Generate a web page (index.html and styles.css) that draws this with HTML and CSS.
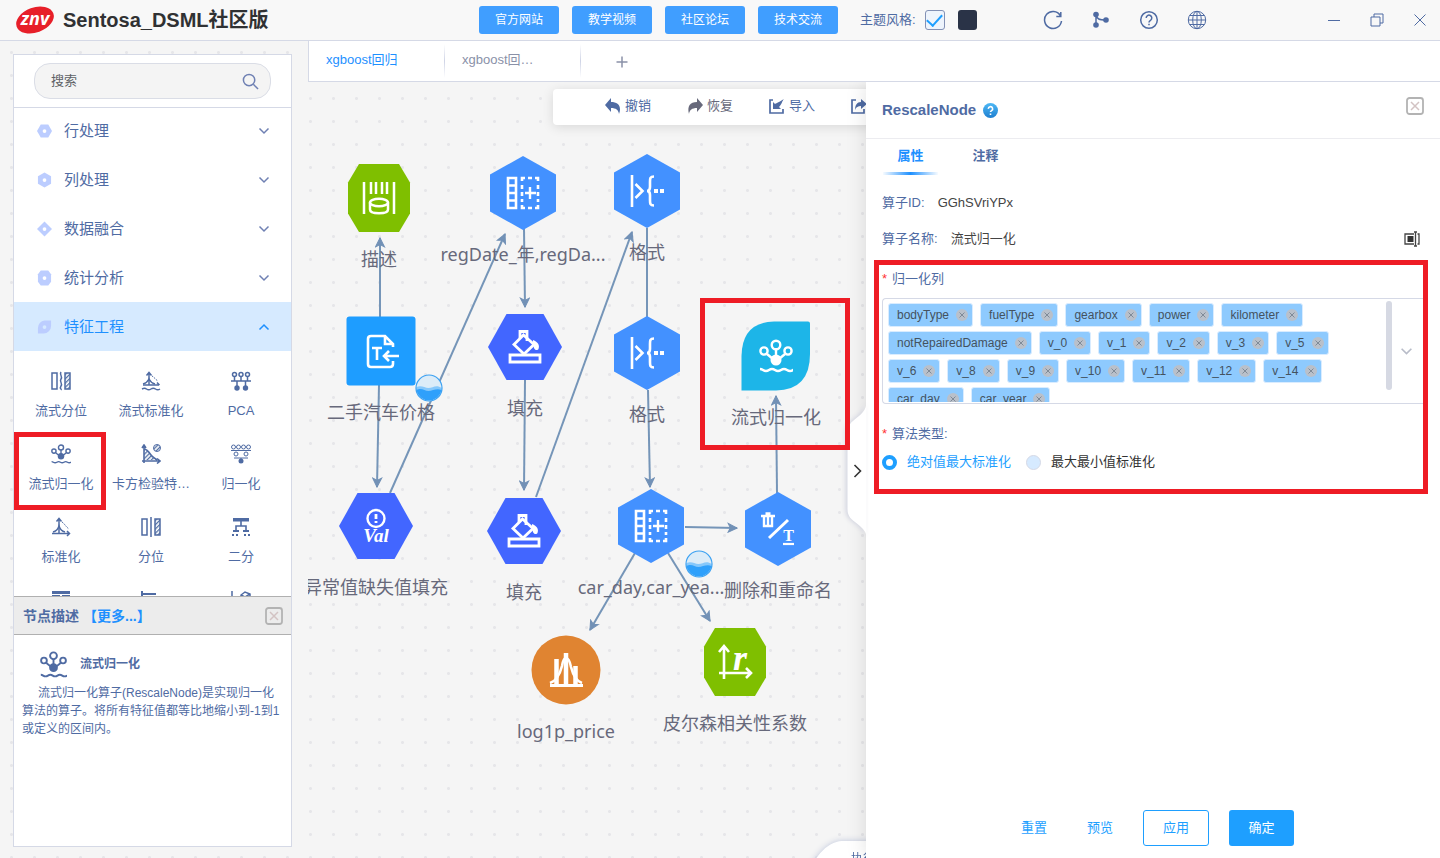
FILE: index.html
```html
<!DOCTYPE html>
<html lang="zh-CN">
<head>
<meta charset="utf-8">
<title>Sentosa_DSML社区版</title>
<link rel="stylesheet" href="styles.css">
</head>
<body>
<svg class="defs" aria-hidden="true">
  <defs>
    <marker id="arrow" viewBox="0 0 10 10" refX="9" refY="5" markerWidth="11" markerHeight="11" markerUnits="userSpaceOnUse" orient="auto">
      <path d="M1 1 9 5 1 9 3 5z" fill="#7291b6" stroke="#7291b6" stroke-width="1"/>
    </marker>
    <linearGradient id="ball" x1="0" y1="0" x2="0" y2="1"><stop offset="0" stop-color="#4db8f5"/><stop offset="1" stop-color="#1f7fd0"/></linearGradient>
    <pattern id="hatch" width="3" height="3" patternUnits="userSpaceOnUse" patternTransform="rotate(45)"><path d="M0 0V3" stroke="#5270a4" stroke-width="2.600"/></pattern>
  </defs>
  <symbol id="chevron" viewBox="0 0 12 12"><path d="M1.500 3.500 6 8 10.500 3.500" fill="none" stroke="currentColor" stroke-width="1.500"/></symbol>
  <symbol id="close" viewBox="0 0 18 18"><rect x="1" y="1" width="16" height="16" rx="2.500" fill="none" stroke="#b3b3b3" stroke-width="1.800"/><path d="M5 5l8 8M13 5l-8 8" stroke="#d3c3c3" stroke-width="1.500"/></symbol>
  <symbol id="tag-x" viewBox="0 0 12 12"><circle cx="6" cy="6" r="6" fill="#b9c0ca"/><path d="M3.500 3.500l5 5M8.500 3.500l-5 5" stroke="#7f8a97" stroke-width="1"/></symbol>
  <symbol id="rescale" viewBox="0 0 34 34">
    <g fill="none" stroke="currentColor" stroke-width="2.400"><circle cx="17" cy="6" r="4.300"/><circle cx="5" cy="12" r="3.600"/><circle cx="29" cy="12" r="3.600"/><path d="M17 10v8M8 15l6 5M26 15l-6 5"/><path d="M1 30c3 0 3 2 6 2s3-2 6-2 3 2 6 2 3-2 6-2 3 2 6 2 2-1 3-1"/></g>
    <circle cx="17" cy="21" r="5.500" fill="currentColor"/>
  </symbol>
  <symbol id="addcol" viewBox="0 0 34 34">
    <g fill="none" stroke="currentColor"><path d="M2 2h8v30H2zM2 9.500h8M2 17h8M2 24.500h8" stroke-width="2.600"/><path d="M16 5V2h3M22 2h4M29 2h3v3M32 9v4M32 16v4M32 23v3M32 29v3h-3M26 32h-4M19 32h-3v-3M16 26v-3M16 20v-4M16 13V9" stroke-width="2.600"/><path d="M24 11v12M19 17h11" stroke-width="2.400"/></g>
  </symbol>
  <symbol id="format" viewBox="0 0 34 34">
    <g fill="none" stroke="currentColor" stroke-width="2.600"><path d="M2 1v32M5.500 10l7 7-7 7"/><path d="M24 2.500c-4 0-4 2-4 5.500v5c0 3-1 4-3 4 2 0 3 1 3 4v5c0 3.500 0 5.500 4 5.500"/></g>
    <path d="M24 15h4v4h-4zM30 15h4v4h-4z" fill="currentColor"/>
  </symbol>
  <symbol id="fill" viewBox="0 0 34 34">
    <g fill="none" stroke="currentColor" stroke-width="2.800"><path d="M2 25h30v7H2z"/><path d="M15.500 5 26 14.500 16 24 6 14.500z"/><path d="M12 8V1.500h7V11"/></g>
    <path d="M25 10c5 2 7 5 5.500 9-1 2-4 1-4.500-1-1-3-1-5-1-8z" fill="currentColor"/>
  </symbol>
  <symbol id="wave" viewBox="0 0 28 28">
    <circle cx="14" cy="14" r="13" fill="#dcecf8"/><path d="M1.500 13c5-2 8 1 12 1s8-4 13 0a12.500 12.500 0 0 1-1 5H2a14 14 0 0 1-.5-6z" fill="#86c8fb"/><path d="M1.500 16c5-3 8 1 12 1s8-3 13-1a12.700 12.700 0 0 1-25 0z" fill="#2fa0fb"/><circle cx="14" cy="14" r="13" fill="none" stroke="#3ba1f2" stroke-width="1.200"/>
  </symbol>
  <symbol id="stdz" viewBox="0 0 20 20"><g fill="none" stroke="currentColor" stroke-width="1.500"><path d="M8 17V2M5.500 4.500 8 1.500l2.500 3M1 16.500h17M16 14l2.500 2.500L16 19"/><path d="M2 15c4-1 5-3 6-6 1 3 2 5 6 6"/></g><path d="M11 5c2 1 4 5 7 7" fill="none" stroke="currentColor" stroke-dasharray="1.500 1"/></symbol>
  <symbol id="stream-stdz" viewBox="0 0 20 20"><g fill="none" stroke="currentColor" stroke-width="1.500"><path d="M8 14V2M5.500 4.500 8 1.500l2.500 3M2 14h16M16 11.500l2.500 2.500"/><path d="M2 13c4-1 5-3 6-5 1 2 2 4 6 5M1 18c2-1 3-1 4.500 0s3 1 4.500 0 3-1 4.500 0 3 1 4.500 0"/></g><path d="M11 5c2 1 4 4 6 5" fill="none" stroke="currentColor" stroke-dasharray="1.500 1"/></symbol>
</svg>

<header class="topbar">
  <div class="brand">
    <svg class="logo" viewBox="0 0 38 30" role="img" aria-label="znv"><ellipse cx="19" cy="15" rx="19.500" ry="12.500" transform="rotate(-20 19 15)" fill="#e71f29"/><text x="19" y="20" text-anchor="middle">znv</text></svg>
    <h1>Sentosa_DSML社区版</h1>
  </div>
  <nav class="links"><button>官方网站</button><button>教学视频</button><button>社区论坛</button><button>技术交流</button></nav>
  <div class="theme"><label for="light">主题风格:</label><input type="checkbox" id="light" checked><button class="dark" aria-label="深色"></button></div>
  <div class="tools">
    <button aria-label="刷新"><svg viewBox="0 0 20 20"><path d="M17.300 5.500A8.500 8.500 0 1 0 18.500 11M17.800 2v4.500h-4.500"/></svg></button>
    <button aria-label="流程"><svg viewBox="0 0 20 20"><path d="M5 5v10M5 5c1 4 3 5 10 5"/><g fill="#4f6ba3" stroke="none"><circle cx="5" cy="4.500" r="2.800"/><circle cx="5" cy="15" r="2.800"/><circle cx="15" cy="10" r="2.800"/></g></svg></button>
    <button aria-label="帮助"><svg viewBox="0 0 20 20"><circle cx="10" cy="10" r="8.300"/><path d="M7.200 8a2.800 2.800 0 1 1 4.300 2.300c-1 .6-1.500 1-1.500 2.200M10 13.700v1.600"/></svg></button>
    <button aria-label="语言"><svg class="thin" viewBox="0 0 20 20"><circle cx="10" cy="10" r="8.700"/><ellipse cx="10" cy="10" rx="4.300" ry="8.700"/><path d="M10 1v18M1 10h18M2.500 5.500h15M2.500 14.500h15"/></svg></button>
  </div>
  <div class="window">
    <button aria-label="最小化"><svg viewBox="0 0 14 14"><path d="M1 7.500h12"/></svg></button>
    <button aria-label="还原"><svg viewBox="0 0 14 14"><path d="M1 4h9v9H1zM4 4V1h9v9h-3"/></svg></button>
    <button aria-label="关闭"><svg viewBox="0 0 14 14"><path d="M1.500 1.500l11 11M12.500 1.500l-11 11"/></svg></button>
  </div>
</header>

<main>
  <aside class="sidebar">
    <div class="search-row"><div class="search"><input type="text" placeholder="搜索" aria-label="搜索"><svg viewBox="0 0 18 18"><circle cx="7.500" cy="7.500" r="6"/><path d="M12 12l5 5"/></svg></div></div>
    <div class="catalog">
      <button class="cat"><svg viewBox="0 0 16 16"><path d="M4 1h8l4 7-4 7H4L0 8z"/><circle cx="8" cy="8" r="2"/></svg><span>行处理</span><svg class="chev"><use href="#chevron"/></svg></button>
      <button class="cat"><svg viewBox="0 0 16 16"><path d="M8 0l7 4v8l-7 4-7-4V4z"/><circle cx="8" cy="8" r="2"/></svg><span>列处理</span><svg class="chev"><use href="#chevron"/></svg></button>
      <button class="cat"><svg viewBox="0 0 16 16"><path d="M8 0l8 8-8 8-8-8z"/><circle cx="8" cy="8" r="2"/></svg><span>数据融合</span><svg class="chev"><use href="#chevron"/></svg></button>
      <button class="cat"><svg viewBox="0 0 16 16"><path d="M4 0h8l3 4v8l-3 4H4l-3-4V4z"/><circle cx="8" cy="8" r="2"/></svg><span>统计分析</span><svg class="chev"><use href="#chevron"/></svg></button>
      <button class="cat active"><svg viewBox="0 0 16 16"><path d="M8 1h7v6a8 8 0 0 1-8 8H1V9a8 8 0 0 1 7-8z"/><circle cx="8" cy="8" r="2"/></svg><span>特征工程</span><svg class="chev"><use href="#chevron"/></svg></button>
      <div class="ops">
        <button class="op"><svg viewBox="0 0 20 20"><g fill="none" stroke="currentColor" stroke-width="1.500"><path d="M1 2h5v16H1zM14 2h5v16h-5z"/><path d="M10 1c-2 3 2 4 0 7s2 4 0 7 1 3 0 4"/></g><path d="M14 2h5v16h-5z" fill="url(#hatch)"/></svg><span>流式分位</span></button>
        <button class="op"><svg><use href="#stream-stdz"/></svg><span>流式标准化</span></button>
        <button class="op"><svg viewBox="0 0 20 20"><g fill="none" stroke="currentColor" stroke-width="1.500"><circle cx="3.500" cy="3.500" r="2"/><circle cx="10" cy="3.500" r="2"/><circle cx="16.500" cy="3.500" r="2"/><path d="M0 10h20M3.500 5.500V10M10 5.500V10M16.500 5.500V10M6 10v5M14.500 10v5"/></g><circle cx="6" cy="17" r="2.700" fill="currentColor"/><circle cx="14.500" cy="17" r="2.700" fill="currentColor"/></svg><span>PCA</span></button>
        <button class="op marked"><svg><use href="#rescale"/></svg><span>流式归一化</span></button>
        <button class="op"><svg viewBox="0 0 20 20"><path d="M3 16V5c3 0 5 3 7 6s4 3 6 5z" fill="url(#hatch)"/><circle cx="16" cy="4" r="3.500" fill="url(#hatch)" stroke="currentColor"/><path d="M3 19V2M1 4l2-3 2 3M1 17h17M16 14.500l3 2.500-3 2.500M3 5c3 0 5 3 7 6s4 3 6 5" fill="none" stroke="currentColor" stroke-width="1.600"/></svg><span>卡方检验特…</span></button>
        <button class="op"><svg viewBox="0 0 20 20"><g fill="none" stroke="currentColor"><circle cx="2.500" cy="3" r="2"/><circle cx="7.500" cy="3" r="2"/><circle cx="12.500" cy="3" r="2"/><circle cx="17.500" cy="3" r="2"/><path d="M0 6.500h20M3 14h14M10 14v3"/><circle cx="5" cy="10" r="2"/><circle cx="15" cy="10" r="2"/></g><circle cx="10" cy="17" r="2.500" fill="currentColor"/></svg><span>归一化</span></button>
        <button class="op"><svg><use href="#stdz"/></svg><span>标准化</span></button>
        <button class="op"><svg viewBox="0 0 20 20"><path d="M14 2h5v16h-5z" fill="url(#hatch)"/><path d="M1 2h5v16H1zM14 2h5v16h-5zM10 0v20" fill="none" stroke="currentColor" stroke-width="1.500"/></svg><span>分位</span></button>
        <button class="op"><svg viewBox="0 0 20 20"><path d="M2 1h16v3.500H2zM2 13h6v2H2zM12 13h6v2h-6zM1 17h2v2H1zM5 17h2v2H5zM13 17h2v2h-2zM17 17h2v2h-2z" fill="currentColor"/><path d="M10 4v5M5 13V9h10v4" fill="none" stroke="currentColor" stroke-width="1.600"/></svg><span>二分</span></button>
        <button class="op" aria-label="分箱"><svg viewBox="0 0 20 20"><path d="M1 1h18v3H1z" fill="currentColor"/><path d="M2 10V6h6v6M12 12V6h6v6" fill="none" stroke="currentColor" stroke-width="2"/></svg></button>
        <button class="op" aria-label="编码"><svg viewBox="0 0 20 20"><path d="M1 1v18M1 4h14" fill="none" stroke="currentColor" stroke-width="2"/></svg></button>
        <button class="op" aria-label="降维"><svg viewBox="0 0 20 20"><path d="M1 1v18M10 5l4-3 5 2v5l-5 2-4-2zM10 5l4 2 5-3" fill="none" stroke="currentColor" stroke-width="1.500"/></svg></button>
      </div>
    </div>
    <section class="desc">
      <div class="desc-head"><h2>节点描述</h2><a href="#more">【更多...】</a><button aria-label="关闭"><svg><use href="#close"/></svg></button></div>
      <div class="desc-body">
        <h3><svg><use href="#rescale"/></svg>流式归一化</h3>
        <p>流式归一化算子(RescaleNode)是实现归一化算法的算子。将所有特征值都等比地缩小到-1到1或定义的区间内。</p>
      </div>
    </section>
  </aside>

  <div class="work">
    <nav class="tabs"><button class="on">xgboost回归</button><button>xgboost回…</button><button class="plus" aria-label="新建"><svg viewBox="0 0 12 12"><path d="M6 .5v11M.5 6h11"/></svg></button></nav>
    <div class="stage">
      <div class="canvas">
        <svg class="edges">
          <line x1="72" y1="236" x2="72" y2="156"/><line x1="71" y1="303" x2="69" y2="405"/><line x1="82" y1="411" x2="197" y2="152"/><line x1="216" y1="147" x2="217" y2="225"/><line x1="217" y1="298" x2="216" y2="408"/><line x1="228" y1="415" x2="324" y2="150"/><line class="plain" x1="339" y1="146" x2="339" y2="235"/><line x1="340" y1="308" x2="342" y2="405"/><line x1="377" y1="445" x2="429" y2="446"/><line x1="469" y1="411" x2="468" y2="314"/><line x1="327" y1="471" x2="282" y2="548"/><line x1="360" y1="471" x2="402" y2="539"/>
        </svg>

        <div class="node green n1"><svg class="shape" viewBox="-37 -37 74 74"><path d="M-20-34h40l11 18.500v31L20 34h-40l-11-18.500v-31z"/><g class="ink"><path d="M-15-16v32M15-16v32M-8-16v12M-3-16v12M3-16v12M8-16v12" stroke-width="2.500"/><ellipse cx="0" cy="4.500" rx="9" ry="3.800" stroke-width="2.500"/><path d="M-9 4.500v7c0 5 18 5 18 0v-7" stroke-width="2.500"/></g></svg><span>描述</span></div>
        <div class="node blue n2"><svg class="shape" viewBox="-37 -37 74 74"><path d="M0-37 33-18.500v37L0 37l-33-18.500v-37z"/><use href="#addcol" x="-17" y="-17" width="34" height="34"/></svg><span>regDate_年,regDa...</span></div>
        <div class="node blue n3"><svg class="shape" viewBox="-37 -37 74 74"><path d="M0-37 33-18.500v37L0 37l-33-18.500v-37z"/><use href="#format" x="-17" y="-17" width="34" height="34"/></svg><span>格式</span></div>
        <div class="node sky n4"><svg class="shape" viewBox="-37 -37 74 74"><rect x="-34.500" y="-34.500" width="69" height="69" rx="3"/><g class="ink"><path d="M12-4v-3l-8-8h-14q-3 0-3 3v25q0 3 3 3H9q3 0 3-3v-3M4-15v8h8M-9-3H1M-4-3V9" stroke-width="2.600"/><path d="M18 5H3M8 0 3 5l5 5" stroke-width="2.600"/></g></svg><span>二手汽车价格</span></div>
        <div class="node indigo n5"><svg class="shape" viewBox="-37 -37 74 74"><path d="M-37 0-18.500-33h37L37 0 18.500 33h-37z"/><use href="#fill" x="-17" y="-17" width="34" height="34"/></svg><span>填充</span></div>
        <div class="node blue n6"><svg class="shape" viewBox="-37 -37 74 74"><path d="M0-37 33-18.500v37L0 37l-33-18.500v-37z"/><use href="#format" x="-17" y="-17" width="34" height="34"/></svg><span>格式</span></div>
        <div class="node cyan n7"><svg class="shape" viewBox="-37 -37 74 74"><path d="M-2-34.500H32q2 0 2 2V-2Q34 34 0 34.500h-34.500V0Q-34-34-2-34.500z"/><use href="#rescale" x="-17" y="-17" width="34" height="34"/></svg><span>流式归一化</span></div>
        <div class="node indigo n8"><svg class="shape" viewBox="-37 -37 74 74"><path d="M-37 0-18.500-33h37L37 0 18.500 33h-37z"/><g class="ink"><circle cx="0" cy="-7.500" r="8.500" stroke-width="2.400"/><path d="M0-12v5M0-5v2" stroke-width="2.800"/></g><text class="val" x="0" y="16" text-anchor="middle">Val</text></svg><span>异常值缺失值填充</span></div>
        <div class="node indigo n9"><svg class="shape" viewBox="-37 -37 74 74"><path d="M-37 0-18.500-33h37L37 0 18.500 33h-37z"/><use href="#fill" x="-17" y="-17" width="34" height="34"/></svg><span>填充</span></div>
        <div class="node blue n10"><svg class="shape" viewBox="-37 -37 74 74"><path d="M0-37 33-18.500v37L0 37l-33-18.500v-37z"/><use href="#addcol" x="-17" y="-17" width="34" height="34"/></svg><span>car_day,car_yea...</span></div>
        <div class="node blue n11"><svg class="shape" viewBox="-37 -37 74 74"><path d="M0-37 33-18.500v37L0 37l-33-18.500v-37z"/><g class="ink"><path d="M-17-13h14M-12.500-15.500h5" stroke-width="2.600"/><path d="M-14-12v9h8v-9M-10-12v9" stroke-width="2.400"/><path d="M-9 9 10-9" stroke-width="3"/><path d="M5 15h11" stroke-width="2.200"/></g><text class="tee" x="10.500" y="12" text-anchor="middle">T</text></svg><span>删除和重命名</span></div>
        <div class="node orange n12"><svg class="shape" viewBox="-37 -37 74 74"><circle r="34.500"/><g class="ink"><path d="M-16 15.500h33" stroke-width="3"/><path d="M-9.500-11V14M0-17V14M9.500-4V14" stroke-width="4.500"/><path d="M-16 13c6-2 10-9 12-17 1-6 2-8 4-8s4 4 5 9c2 8 5 14 11 16" stroke-width="2.600"/></g></svg><span>log1p_price</span></div>
        <div class="node green n13"><svg class="shape" viewBox="-37 -37 74 74"><path d="M-20-34h40l11 18.500v31L20 34h-40l-11-18.500v-31z"/><g class="ink"><path d="M-11 17v-32M-16-10l5-6 5 6M-16 11h31M11 6l5 5-5 5" stroke-width="2.600"/></g><text class="are" x="5" y="8" text-anchor="middle">r</text></svg><span>皮尔森相关性系数</span></div>
        <svg class="badge b1"><use href="#wave"/></svg>
        <svg class="badge b2"><use href="#wave"/></svg>
        <div class="toolbar">
          <button><svg viewBox="0 0 16 16"><path d="M6 0v4c7 0 11 4 8 12-.5-4-3-6-8-6v4L0 7z" fill="currentColor"/></svg>撤销</button>
          <button class="grey"><svg viewBox="0 0 16 16"><path d="M10 0v4C3 4 0 8 2 16c.5-4 3-6 8-6v4l6-7z" fill="currentColor"/></svg>恢复</button>
          <button><svg viewBox="0 0 16 16"><path d="M4 2H1v13h13v-4" fill="none" stroke="currentColor" stroke-width="1.700"/><path d="M4 11V4l2 2c2-1 4-2 9-5-2 2-2 5-5 8l2 2z" fill="currentColor"/></svg>导入</button>
          <button aria-label="导出"><svg viewBox="0 0 16 16"><path d="M5 2H1v13h12v-4" fill="none" stroke="currentColor" stroke-width="1.700"/><path d="M10 1l6 5-6 5V8c-3 0-5 1-6 4 0-5 2-8 6-8z" fill="currentColor"/></svg></button>
        </div>
        <button class="runlog">执行</button>
      </div>
      <div class="focus"></div>

      <section class="panel">
        <button class="handle" aria-label="收起"><svg viewBox="0 0 20 136"><path class="bump" d="M20 0v136c0-6-3-9-9-14S1 115 1 107V30c0-7 4-10 9-14s10-8 10-16z"/><path class="tick" d="M8 63l6 6-6 6"/></svg></button>
        <div class="panel-head"><h2>RescaleNode</h2><svg class="q" viewBox="0 0 14 14"><circle cx="7" cy="7" r="7" fill="url(#ball)"/><path d="M5 5.500a2 2 0 1 1 3 1.600c-.7.400-1 .7-1 1.400M7 9.700v1.500" fill="none" stroke="#fff" stroke-width="1.500"/></svg><button aria-label="关闭"><svg><use href="#close"/></svg></button></div>
        <div class="panel-tabs"><button class="on">属性</button><button>注释</button></div>
        <dl class="info"><div><dt>算子ID:</dt><dd>GGhSVriYPx</dd></div><div><dt>算子名称:</dt><dd>流式归一化</dd><button aria-label="重命名"><svg viewBox="0 0 18 16"><path d="M11 3H2v10h9M14.500 3H16v10h-1.500M12.500 1v14M11 1h3M11 15h3" fill="none" stroke="#444" stroke-width="1.300"/><path d="M4.500 5h6v6h-6z" fill="#333"/></svg></button></div></dl>
        <form class="props">
          <div class="caption"><i>*</i>归一化列</div>
          <div class="select">
            <div class="tags">
              <span>bodyType<button type="button" aria-label="删除"><svg><use href="#tag-x"/></svg></button></span><span>fuelType<button type="button" aria-label="删除"><svg><use href="#tag-x"/></svg></button></span><span>gearbox<button type="button" aria-label="删除"><svg><use href="#tag-x"/></svg></button></span><span>power<button type="button" aria-label="删除"><svg><use href="#tag-x"/></svg></button></span><span>kilometer<button type="button" aria-label="删除"><svg><use href="#tag-x"/></svg></button></span><span>notRepairedDamage<button type="button" aria-label="删除"><svg><use href="#tag-x"/></svg></button></span><span>v_0<button type="button" aria-label="删除"><svg><use href="#tag-x"/></svg></button></span><span>v_1<button type="button" aria-label="删除"><svg><use href="#tag-x"/></svg></button></span><span>v_2<button type="button" aria-label="删除"><svg><use href="#tag-x"/></svg></button></span><span>v_3<button type="button" aria-label="删除"><svg><use href="#tag-x"/></svg></button></span><span>v_5<button type="button" aria-label="删除"><svg><use href="#tag-x"/></svg></button></span><span>v_6<button type="button" aria-label="删除"><svg><use href="#tag-x"/></svg></button></span><span>v_8<button type="button" aria-label="删除"><svg><use href="#tag-x"/></svg></button></span><span>v_9<button type="button" aria-label="删除"><svg><use href="#tag-x"/></svg></button></span><span>v_10<button type="button" aria-label="删除"><svg><use href="#tag-x"/></svg></button></span><span>v_11<button type="button" aria-label="删除"><svg><use href="#tag-x"/></svg></button></span><span>v_12<button type="button" aria-label="删除"><svg><use href="#tag-x"/></svg></button></span><span>v_14<button type="button" aria-label="删除"><svg><use href="#tag-x"/></svg></button></span><span>car_day<button type="button" aria-label="删除"><svg><use href="#tag-x"/></svg></button></span><span>car_year<button type="button" aria-label="删除"><svg><use href="#tag-x"/></svg></button></span>
            </div>
            <div class="thumb"></div>
            <button type="button" class="drop" aria-label="展开"><svg><use href="#chevron"/></svg></button>
          </div>
          <div class="caption second"><i>*</i>算法类型:</div>
          <div class="radios"><label><input type="radio" name="alg" checked><span>绝对值最大标准化</span></label><label><input type="radio" name="alg"><span>最大最小值标准化</span></label></div>
        </form>
        <footer><button class="text">重置</button><button class="text">预览</button><button class="line">应用</button><button class="solid">确定</button></footer>
      </section>
    </div>
  </div>
</main>
</body>
</html>
```
FILE: styles.css
```css
* { box-sizing: border-box; }
body { margin: 0; height: 100vh; display: flex; flex-direction: column; overflow: hidden; font: 13px/20px "Liberation Sans", "Noto Sans CJK SC", sans-serif; color: #4f6ba3; background: #f5f5f5; }
button { font: inherit; color: inherit; background: none; border: 0; padding: 0; margin: 0; }
svg { display: block; flex: none; }
h1, h2, h3, p, dl, dd { margin: 0; }
a { text-decoration: none; }
.defs { position: absolute; width: 0; height: 0; }

.topbar { display: flex; align-items: center; height: 41px; flex: none; border-bottom: 1px solid #d5d9e6; background: #f8f8f8; }
.brand { display: flex; align-items: center; gap: 9px; width: 479px; padding-left: 16px; }
.brand h1 { font-size: 20px; line-height: 28px; color: #303133; }
.logo { width: 38px; height: 30px; overflow: visible; }
.logo text { font: italic bold 18px "Open Sans", sans-serif; fill: #fff; }
.links { display: flex; gap: 13px; }
.links button { width: 80px; height: 28px; border-radius: 3px; background: #409eff; color: #fff; font-size: 12px; }
.theme { display: flex; align-items: center; margin-left: 22px; }
.theme input { appearance: none; width: 20px; height: 20px; margin: 0 13px 0 9px; border: 1px solid #8391b5; border-radius: 3px; background: #eef4fc; display: grid; place-items: center; }
.theme input:checked::after { content: ""; width: 7px; height: 13px; margin-bottom: 4px; border: solid #1e9fff; border-width: 0 2px 2px 0; transform: rotate(42deg); }
.theme .dark { width: 19px; height: 20px; border-radius: 3px; background: #2a3347; }
.tools { display: flex; gap: 28px; margin-left: auto; }
.tools svg { width: 20px; height: 20px; fill: none; stroke: #4f6ba3; stroke-width: 1.500; }
.tools svg.thin { stroke-width: 1; }
.window { display: flex; gap: 29px; margin: 0 13px 0 120px; }
.window svg { width: 14px; height: 14px; fill: none; stroke: #4f6ba3; stroke-width: 1; }

main { flex: 1; min-height: 0; display: flex; background: radial-gradient(circle at center, #e6e6e9 0 1px, transparent 2px) 0 0 / 23px 23px #f5f5f5; }
.sidebar { width: 279px; flex: none; margin: 13px 16px 11px 13px; border: 1px solid #d5d9e6; background: #fff; display: flex; flex-direction: column; }
.search-row { flex: none; padding: 8px 20px; border-bottom: 1px solid #d5d9e6; }
.search { display: flex; align-items: center; height: 36px; padding: 0 11px 0 16px; border: 1px solid #dadde6; border-radius: 16px; background: #f4f4f4; }
.search input { flex: 1; min-width: 0; padding: 0; border: 0; background: none; font: inherit; }
.search input::placeholder { color: #606266; opacity: 1; }
.search svg { width: 17px; height: 17px; fill: none; stroke: #6f80b3; stroke-width: 1.600; }
.catalog { flex: 1; min-height: 0; overflow: hidden; }
.cat { display: flex; align-items: center; width: 100%; height: 49px; padding: 0 21px 0 23px; font-size: 15px; text-align: left; }
.cat:first-child { margin-top: -2px; }
.cat > svg:first-child { width: 15px; height: 16px; fill: #bccdff; }
.cat circle { fill: #fff; }
.cat span { flex: 1; padding-left: 12px; }
.cat .chev { width: 12px; height: 12px; color: #6f80b3; }
.cat.active { background: #d6eaff; color: #1e90ff; }
.cat.active circle { fill: #d6eaff; }
.cat.active .chev { color: #1e90ff; transform: rotate(180deg); }
.ops { display: grid; grid-template-columns: repeat(3, 1fr); padding: 8px 5px 0 2px; }
.op { display: flex; flex-direction: column; align-items: center; gap: 10px; height: 73px; padding-top: 12px; white-space: nowrap; }
.op svg { width: 20px; height: 20px; }
.op.marked { position: relative; }
.op.marked::before { content: ""; position: absolute; inset: 0 0 -5px -2px; border: 5px solid #ee1c25; }
.desc { flex: 0 0 250px; }
.desc-head { display: flex; align-items: center; height: 39px; padding: 0 8px 0 9px; border: solid #b0b0b0; border-width: 1px 0; background: #ececec; font-size: 14px; font-weight: bold; }
.desc-head h2 { font-size: 14px; }
.desc-head a { margin-left: 4px; color: #1e90ff; }
.desc-head button { margin-left: auto; }
.desc-head button svg, .panel-head button svg { width: 18px; height: 18px; }
.desc-body { padding: 14px 8px; font-size: 12px; line-height: 18px; }
.desc-body h3 { display: flex; align-items: center; gap: 13px; height: 30px; margin-bottom: 5px; padding-left: 18px; font-size: 12px; }
.desc-body svg { width: 27px; height: 27px; }
.desc-body p { text-indent: 16px; word-break: break-all; }

.work { flex: 1; min-width: 0; display: flex; flex-direction: column; }
.tabs { display: flex; flex: none; height: 41px; border: solid #d5d9e6; border-width: 0 0 1px 1px; background: #fff; }
.tabs button { width: 136px; padding: 0 0 2px 17px; text-align: left; color: #8a91a8; border-right: 1px solid; border-image: linear-gradient(transparent 10%, #cfd4e6 50%, transparent 90%) 1; }
.tabs .on { color: #1e90ff; }
.tabs .plus { width: 82px; padding: 2px 0 0 35px; border: 0; }
.plus svg { width: 12px; height: 12px; fill: none; stroke: #8a91a8; stroke-width: 1.500; }
.stage { position: relative; flex: 1; min-height: 0; display: flex; overflow: hidden; }
.canvas { position: relative; flex: 1; min-width: 0; overflow: hidden; }
.edges { position: absolute; width: 100%; height: 100%; }
.edges line { stroke: #7595b8; stroke-width: 2; marker-end: url(#arrow); }
.edges .plain { marker-end: none; }
.node { position: absolute; width: 180px; margin: -37px 0 0 -90px; display: flex; flex-direction: column; align-items: center; font: 18px/24px "Noto Sans", "Noto Sans CJK SC", sans-serif; color: #67697b; white-space: nowrap; }
.node span { margin-top: 12px; }
.shape { width: 74px; height: 74px; color: #fff; fill: currentColor; }
.shape .ink { fill: none; stroke: #fff; }
.green .shape > path { fill: #7fbf00; }
.blue .shape > path { fill: #4391ff; }
.sky .shape > rect { fill: #1e9dff; }
.indigo .shape > path { fill: #4266ff; }
.cyan .shape > path { fill: #1db5e8; }
.orange .shape > circle { fill: #e08431; }
.val { font: italic bold 19px "Liberation Serif", serif; }
.tee { font: bold 16px "Liberation Serif", serif; }
.are { font: italic bold 36px "Liberation Serif", serif; }
.n1 { left: 71px; top: 116px; }
.n2 { left: 215px; top: 111px; }
.n3 { left: 339px; top: 109px; }
.n4 { left: 73px; top: 269px; }
.n5 { left: 217px; top: 265px; }
.n6 { left: 339px; top: 271px; }
.n7 { left: 468px; top: 274px; }
.n8 { left: 68px; top: 444px; }
.n9 { left: 216px; top: 449px; }
.n10 { left: 343px; top: 444px; }
.n11 { left: 470px; top: 447px; }
.n12 { left: 258px; top: 588px; }
.n13 { left: 427px; top: 580px; }
.badge { position: absolute; width: 28px; height: 28px; }
.b1 { left: 107px; top: 292px; }
.b2 { left: 377px; top: 468px; }
.focus { position: absolute; z-index: 2; left: 392px; top: 216px; width: 150px; height: 152px; border: 5px solid #ee1c25; pointer-events: none; }
.toolbar { position: absolute; left: 245px; right: -50px; top: 7px; display: flex; gap: 36px; height: 36px; padding-left: 52px; border-radius: 4px; background: #fff; box-shadow: 0 2px 12px rgba(0, 0, 0, .12); white-space: nowrap; }
.toolbar button { display: flex; align-items: center; gap: 4px; padding-bottom: 2px; }
.toolbar svg { width: 16px; height: 16px; }
.toolbar .grey { color: #67697b; }
.runlog { position: absolute; right: -50px; bottom: -18px; width: 100px; height: 35px; padding-left: 35px; text-align: left; font-size: 12px; white-space: nowrap; filter: drop-shadow(0 0 3px #bcc4da); }
.runlog::before { content: ""; position: absolute; inset: 0; z-index: -1; border-radius: 12px 0 0 0; background: #fff; transform: skewX(-38deg); }

.panel { position: relative; flex: 0 0 574px; display: flex; flex-direction: column; background: #fff; box-shadow: 0 0 20px rgba(0, 0, 0, .12); }
.handle { position: absolute; left: -20px; top: 320px; }
.handle svg { width: 21px; height: 136px; overflow: visible; }
.bump { fill: #fff; filter: drop-shadow(-2px 0 2px #d3d5e0); }
.tick { fill: none; stroke: #333; stroke-width: 1.600; }
.panel-head { display: flex; align-items: center; flex: none; height: 57px; padding: 0 16px; border-bottom: 1px solid #ececf0; }
.panel-head h2 { font-size: 15px; }
.q { width: 15px; height: 15px; margin-left: 7px; }
.panel-head button { margin: 0 0 8px auto; }
.panel-tabs { display: flex; flex: none; gap: 20px; height: 36px; padding-left: 17px; font-weight: bold; }
.panel-tabs button { width: 55px; border-bottom: 3px solid transparent; }
.panel-tabs .on { color: #1e90ff; border-image: linear-gradient(90deg, transparent, #1e90ff, transparent) 1; }
.info { padding: 10px 19px 0 16px; }
.info div { display: flex; align-items: center; height: 36px; }
.info dd { padding-left: 13px; color: #444; }
.info button { margin-left: auto; }
.info button svg { width: 18px; height: 16px; }
.props { margin: 3px 12px 0 8px; height: 234px; padding: 4px 0 0 3px; border: 5px solid #ee1c25; }
.caption i { display: inline-block; width: 10px; color: #f33; font-style: normal; }
.select { display: flex; height: 106px; margin-top: 9px; padding: 2px 0 1px; border: 1px solid #d5d9e6; border-radius: 4px 0 0 4px; border-right: 0; }
.tags { flex: 1; display: flex; flex-wrap: wrap; align-content: flex-start; gap: 4px 7px; overflow: hidden; padding: 2px 0 0 5px; }
.tags span { display: flex; align-items: center; gap: 7px; height: 24px; padding: 0 4px 0 8px; border: 1px solid #d9ecff; border-radius: 3px; background: #8ecafe; color: #44525f; font-size: 12px; }
.tags svg { width: 12px; height: 12px; }
.thumb { flex: none; width: 6px; height: 89px; border-radius: 3px; background: #d6d9e3; }
.drop { width: 31px; padding-left: 8px; color: #b8bcc8; }
.drop svg { width: 13px; height: 13px; }
.caption.second { margin-top: 20px; }
.radios { display: flex; gap: 15px; margin-top: 8px; }
.radios label { display: flex; align-items: center; gap: 10px; color: #333; }
.radios input { appearance: none; width: 15px; height: 15px; margin: 0; border: 1px solid #d5d9e6; border-radius: 50%; background: #d6eaff; }
.radios input:checked { border: 4px solid #1e9fff; background: #fff; }
.radios input:checked + span { color: #1e9fff; }
.panel footer { display: flex; justify-content: flex-end; gap: 20px; margin-top: auto; padding: 0 146px 12px 0; }
.panel footer button { width: 65px; height: 36px; border-radius: 3px; color: #1e9fff; }
.panel footer .text { width: 46px; }
.panel footer .line { width: 66px; border: 1px solid #1e9fff; }
.panel footer .solid { background: #1e9fff; color: #fff; }
```
